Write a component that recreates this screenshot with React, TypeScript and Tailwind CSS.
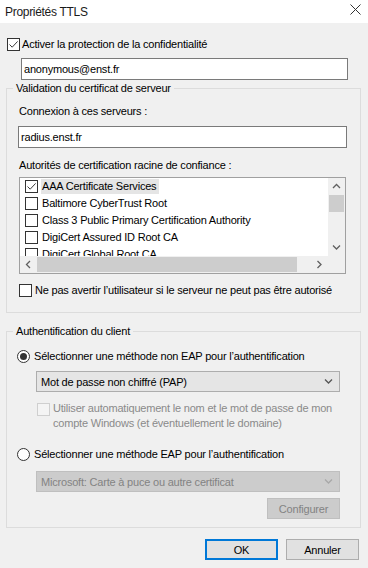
import React from 'react'

const font = { fontFamily: '"Liberation Sans", Arial, sans-serif' }

function Check({ checked = false, disabled = false }: { checked?: boolean; disabled?: boolean }) {
  return (
    <span
      className={`flex h-[13px] w-[13px] shrink-0 items-center justify-center border ${
        disabled ? 'border-[#cfcfcf] bg-[#f4f4f4]' : 'border-[#333333] bg-white'
      }`}
    >
      {checked && (
        <svg width="11" height="11" viewBox="0 0 11 11">
          <path d="M1.5 5.5 L4.2 8.2 L9.6 2.4" fill="none" stroke="#3c3c3c" strokeWidth="1" />
        </svg>
      )}
    </span>
  )
}

function Radio({ checked = false }: { checked?: boolean }) {
  return (
    <span className="flex h-[13px] w-[13px] shrink-0 items-center justify-center rounded-full border border-[#333333] bg-white">
      {checked && <span className="h-[7px] w-[7px] rounded-full bg-[#333333]" />}
    </span>
  )
}

function Chevron({ dir, color = '#606060' }: { dir: 'up' | 'down' | 'left' | 'right'; color?: string }) {
  const d = {
    up: 'M1 5 L4.5 1.5 L8 5',
    down: 'M1 1.5 L4.5 5 L8 1.5',
    left: 'M5 1 L1.5 4.5 L5 8',
    right: 'M1.5 1 L5 4.5 L1.5 8',
  }[dir]
  const horiz = dir === 'up' || dir === 'down'
  return (
    <svg width={horiz ? 9 : 7} height={horiz ? 7 : 9} viewBox={horiz ? '0 0 9 7' : '0 0 7 9'}>
      <path d={d} fill="none" stroke={color} strokeWidth="1.3" />
    </svg>
  )
}

const certs = [
  'AAA Certificate Services',
  'Baltimore CyberTrust Root',
  'Class 3 Public Primary Certification Authority',
  'DigiCert Assured ID Root CA',
  'DigiCert Global Root CA',
]

export default function App() {
  return (
    <div
      className="h-[568px] w-[368px] overflow-hidden bg-[#f0f0f0] text-[11px] leading-[14px] tracking-[-0.2px] text-black"
      style={font}
    >
      {/* title bar */}
      <div className="flex h-[23px] items-center justify-between bg-white pl-[5px] pr-[7px]">
        <span className="text-[12px] tracking-[-0.3px] text-[#1a1a1a]">Propriétés TTLS</span>
        <svg width="11" height="11" viewBox="0 0 11 11" className="mb-[4px]">
          <path d="M0.5 0.5 L10.5 10.5 M10.5 0.5 L0.5 10.5" stroke="#333" strokeWidth="1" />
        </svg>
      </div>

      <div className="mt-[14px] ml-[7px] flex h-[14px] items-center gap-[2px]">
        <Check checked />
        <span>Activer la protection de la confidentialité</span>
      </div>

      <div className="mt-[7px] ml-[21px] flex h-[22px] w-[327px] items-center border border-[#7a7a7a] bg-white pl-[2px]">
        anonymous@enst.fr
      </div>

      {/* server certificate validation */}
      <fieldset className="mt-[1px] ml-[6px] flex w-[355px] flex-col border border-[#dcdcdc] pb-[15px]">
        <legend className="ml-[6px] px-[3px] leading-[14px]">Validation du certificat de serveur</legend>
        <div className="mt-[9px] ml-[12px]">Connexion à ces serveurs :</div>
        <div className="mt-[8px] ml-[11px] flex h-[22px] w-[329px] items-center border border-[#7a7a7a] bg-white pl-[2px]">
          radius.enst.fr
        </div>
        <div className="mt-[10px] ml-[12px]">Autorités de certification racine de confiance :</div>

        <div className="mt-[5px] ml-[12px] grid h-[97px] w-[327px] grid-cols-[1fr_17px] grid-rows-[1fr_17px] border border-[#a0a0a0] bg-white">
          <div className="overflow-hidden pl-[5px]">
            {certs.map((c, i) => (
              <div key={c} className="flex h-[17px] items-center gap-[3px]">
                <Check checked={i === 0} />
                <span className={`px-[1px] leading-[15px] ${i === 0 ? 'bg-[#e5e5e5] pr-[3px]' : ''}`}>{c}</span>
              </div>
            ))}
          </div>
          <div className="flex flex-col items-center bg-[#f0f0f0]">
            <div className="flex h-[17px] items-center">
              <Chevron dir="up" />
            </div>
            <div className="h-[17px] w-[15px] bg-[#cdcdcd]" />
            <div className="flex-1" />
            <div className="flex h-[17px] items-center">
              <Chevron dir="down" />
            </div>
          </div>
          <div className="flex items-center bg-[#f0f0f0]">
            <div className="flex w-[17px] justify-center">
              <Chevron dir="left" />
            </div>
            <div className="h-[15px] w-[260px] bg-[#cdcdcd]" />
            <div className="flex-1" />
            <div className="flex w-[17px] justify-center">
              <Chevron dir="right" />
            </div>
          </div>
          <div className="bg-[#f0f0f0]" />
        </div>

        <div className="mt-[9px] ml-[12px] flex h-[14px] items-center gap-[3px]">
          <Check />
          <span>Ne pas avertir l’utilisateur si le serveur ne peut pas être autorisé</span>
        </div>
      </fieldset>

      {/* client authentication */}
      <fieldset className="mt-[11px] ml-[6px] flex w-[355px] flex-col border border-[#dcdcdc] pb-[8px]">
        <legend className="ml-[6px] px-[3px] leading-[14px]">Authentification du client</legend>
        <div className="mt-[11px] ml-[10px] flex h-[14px] items-center gap-[4px]">
          <Radio checked />
          <span>Sélectionner une méthode non EAP pour l’authentification</span>
        </div>
        <div className="mt-[8px] ml-[29px] flex h-[21px] w-[304px] items-center justify-between border border-[#adadad] bg-[#e5e5e5] pl-[4px] pr-[6px]">
          <span>Mot de passe non chiffré (PAP)</span>
          <Chevron dir="down" color="#555" />
        </div>
        <div className="mt-[9px] ml-[30px] flex items-start gap-[3px] text-[#8a8a8a]">
          <span className="mt-[2px]">
            <Check disabled />
          </span>
          <span className="leading-[15px]">
            Utiliser automatiquement le nom et le mot de passe de mon
            <br />
            compte Windows (et éventuellement le domaine)
          </span>
        </div>
        <div className="mt-[16px] ml-[10px] flex h-[14px] items-center gap-[4px]">
          <Radio />
          <span>Sélectionner une méthode EAP pour l’authentification</span>
        </div>
        <div className="mt-[10px] ml-[29px] flex h-[21px] w-[304px] items-center justify-between border border-[#bfbfbf] bg-[#cccccc] pl-[4px] pr-[6px] text-[#838383]">
          <span>Microsoft: Carte à puce ou autre certificat</span>
          <Chevron dir="down" color="#a8a8a8" />
        </div>
        <div className="mt-[6px] ml-[260px] flex h-[21px] w-[73px] items-center justify-center border border-[#bfbfbf] bg-[#cccccc] text-[#838383]">
          Configurer
        </div>
      </fieldset>

      <div className="mt-[11px] flex justify-end gap-[8px] pr-[9px]">
        <div className="flex h-[21px] w-[73px] items-center justify-center border-2 border-[#0078d7] bg-[#e1e1e1]">
          OK
        </div>
        <div className="flex h-[21px] w-[73px] items-center justify-center border border-[#adadad] bg-[#e1e1e1]">
          Annuler
        </div>
      </div>
    </div>
  )
}
